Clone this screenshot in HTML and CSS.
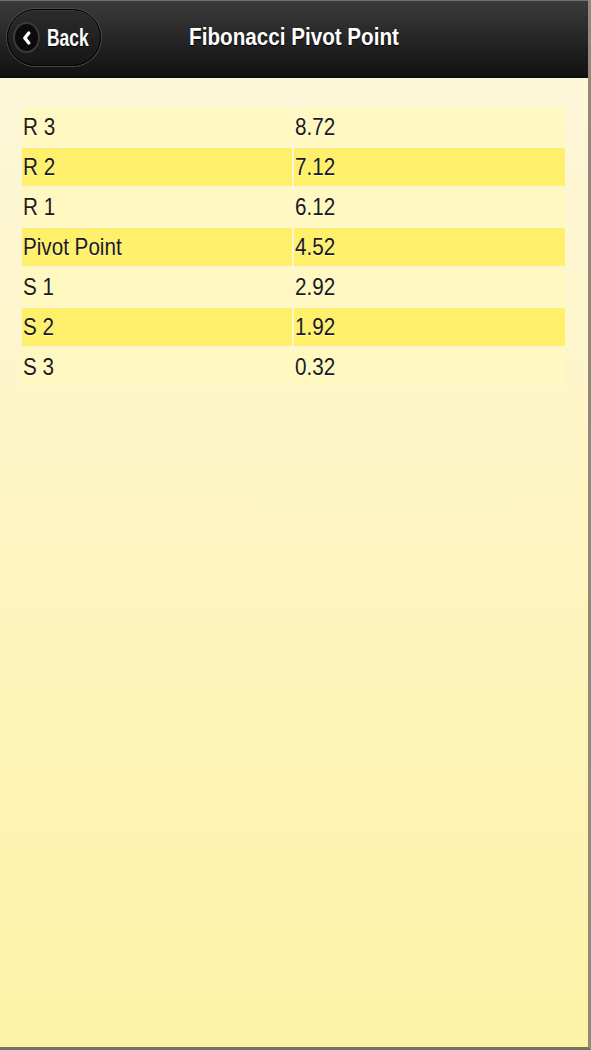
FILE: index.html
```html
<!DOCTYPE html>
<html>
<head>
<meta charset="utf-8">
<link rel="stylesheet" href="styles.css">
</head>
<body>
<div class="page">
  <header class="bar">
    <a class="back">
      <span class="back-icon">
        <svg width="14" height="16" viewBox="0 0 14 16"><path d="M8.8 3 L4.8 8 L8.8 13" fill="none" stroke="#fff" stroke-width="3.4" stroke-linecap="round" stroke-linejoin="round"/></svg>
      </span>
      <span class="back-label"><span class="sq sq-b">Back</span></span>
    </a>
    <h1 class="title"><span class="sq sq-c">Fibonacci Pivot Point</span></h1>
  </header>
  <main class="content">
    <table class="pivots">
      <tr class="odd"><td><span class="sq">R 3</span></td><td><span class="sq">8.72</span></td></tr>
      <tr class="even"><td><span class="sq">R 2</span></td><td><span class="sq">7.12</span></td></tr>
      <tr class="odd"><td><span class="sq">R 1</span></td><td><span class="sq">6.12</span></td></tr>
      <tr class="even"><td><span class="sq">Pivot Point</span></td><td><span class="sq">4.52</span></td></tr>
      <tr class="odd"><td><span class="sq">S 1</span></td><td><span class="sq">2.92</span></td></tr>
      <tr class="even"><td><span class="sq">S 2</span></td><td><span class="sq">1.92</span></td></tr>
      <tr class="odd"><td><span class="sq">S 3</span></td><td><span class="sq">0.32</span></td></tr>
    </table>
  </main>
</div>
</body>
</html>
```

FILE: styles.css
```css
html, body {
  margin: 0;
  padding: 0;
  background: #7f7c68;
}
.page {
  width: 588px;
  height: 1047px;
  border-right: 3px solid #8e8b79;
  border-bottom: 3px solid #77735f;
  background: linear-gradient(#fdf7dd, #fef2a7);
  font-family: "Liberation Sans", Arial, sans-serif;
  display: flex;
  flex-direction: column;
  overflow: hidden;
}
.sq {
  display: inline-block;
  transform: scaleX(0.86);
  transform-origin: left center;
  white-space: nowrap;
}
.sq-c {
  transform-origin: center center;
}
.sq-b {
  transform: scaleX(0.76);
}
.bar {
  height: 76px;
  border-top: 1px solid #6c7272;
  border-bottom: 1px solid #0a0a0a;
  background: linear-gradient(#3b3b3b, #111111);
  display: flex;
  align-items: center;
  justify-content: center;
  position: relative;
  flex: none;
}
.title {
  margin: 0;
  color: #fff;
  font-size: 24px;
  font-weight: bold;
  text-shadow: 0 1px 1px #000;
  line-height: 1;
  margin-top: -4px;
}
.back {
  position: absolute;
  left: 7px;
  top: 8px;
  width: 94px;
  height: 57px;
  box-sizing: border-box;
  border-radius: 29px;
  border: 1px solid #000;
  box-shadow: 0 0 0 1px #4a4a4a, inset 0 1px 0 #3a3a3a;
  background: linear-gradient(#2c2c2c, #161616);
  display: flex;
  align-items: center;
  padding-left: 7px;
  gap: 9px;
}
.back-icon {
  width: 23px;
  height: 27px;
  border-radius: 50%;
  background: #0b0b0b;
  box-shadow: 0 0 0 2px #3a3a3a;
  display: flex;
  align-items: center;
  justify-content: center;
  flex: none;
}
.back-label {
  color: #fff;
  font-size: 23px;
  font-weight: bold;
  text-shadow: 0 1px 1px #000;
  margin-top: 2px;
}
.content {
  padding: 28px 0 0 20px;
}
.pivots {
  border-spacing: 2px;
  border-collapse: separate;
}
.pivots td {
  height: 38px;
  padding: 0 0 0 1px;
  font-size: 24px;
  color: #1b1b1b;
  text-shadow: 0 1px 0 rgba(255,255,255,0.6);
  vertical-align: middle;
  box-sizing: border-box;
}
.pivots td:first-child {
  width: 270px;
}
.pivots td:last-child {
  width: 271px;
}
.odd td {
  background: #fff8c0;
}
.even td {
  background: #fff06c;
}
```
